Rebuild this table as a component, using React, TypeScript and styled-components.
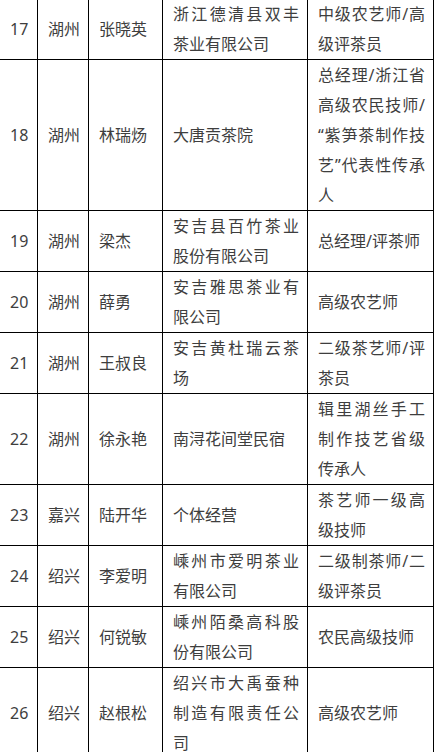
import React from 'react';
import styled, { createGlobalStyle } from 'styled-components';

const GlobalStyle = createGlobalStyle`
  html, body {
    margin: 0;
    padding: 0;
    background: #ffffff;
    overflow: hidden;
  }
  body {
    font-family: "Noto Sans", "Noto Sans CJK SC", sans-serif;
  }
`;

type Row = {
  no: number;
  city: string;
  name: string;
  company: string;
  title: string;
};

const rows: Row[] = [
  { no: 17, city: '湖州', name: '张晓英', company: '浙江德清县双丰茶业有限公司', title: '中级农艺师/高级评茶员' },
  {
    no: 18,
    city: '湖州',
    name: '林瑞炀',
    company: '大唐贡茶院',
    // zero-width space lets the line break before the opening quote
    title: '总经理/浙江省高级农民技师/\u200B“紫笋茶制作技艺”代表性传承人',
  },
  { no: 19, city: '湖州', name: '梁杰', company: '安吉县百竹茶业股份有限公司', title: '总经理/评茶师' },
  { no: 20, city: '湖州', name: '薛勇', company: '安吉雅思茶业有限公司', title: '高级农艺师' },
  { no: 21, city: '湖州', name: '王叔良', company: '安吉黄杜瑞云茶场', title: '二级茶艺师/评茶员' },
  { no: 22, city: '湖州', name: '徐永艳', company: '南浔花间堂民宿', title: '辑里湖丝手工制作技艺省级传承人' },
  { no: 23, city: '嘉兴', name: '陆开华', company: '个体经营', title: '茶艺师一级高级技师' },
  { no: 24, city: '绍兴', name: '李爱明', company: '嵊州市爱明茶业有限公司', title: '二级制茶师/二级评茶员' },
  { no: 25, city: '绍兴', name: '何锐敏', company: '嵊州陌桑高科股份有限公司', title: '农民高级技师' },
  { no: 26, city: '绍兴', name: '赵根松', company: '绍兴市大禹蚕种制造有限责任公司', title: '高级农艺师' },
];

const Table = styled.table`
  border-collapse: collapse;
  table-layout: fixed;
  width: 435px;
  margin: -2px 0 0 -1px;
`;

const Col = styled.col<{ $w: number }>`
  width: ${(p) => p.$w}px;
`;

const Cell = styled.td<{ $justify?: boolean }>`
  border: 1px solid #000000;
  padding: 0 8px 0 10px;
  font-size: 16px;
  line-height: 30px;
  color: #3e3e3e;
  vertical-align: middle;
  text-align: ${(p) => (p.$justify ? 'justify' : 'left')};
  word-break: break-all;
`;

export default function App() {
  return (
    <>
      <GlobalStyle />
      <Table>
        <colgroup>
          <Col $w={38} />
          <Col $w={51} />
          <Col $w={74} />
          <Col $w={145} />
          <Col $w={126} />
        </colgroup>
        <tbody>
          {rows.map((r) => (
            <tr key={r.no}>
              <Cell>{r.no}</Cell>
              <Cell>{r.city}</Cell>
              <Cell>{r.name}</Cell>
              <Cell $justify>{r.company}</Cell>
              <Cell $justify>{r.title}</Cell>
            </tr>
          ))}
        </tbody>
      </Table>
    </>
  );
}
